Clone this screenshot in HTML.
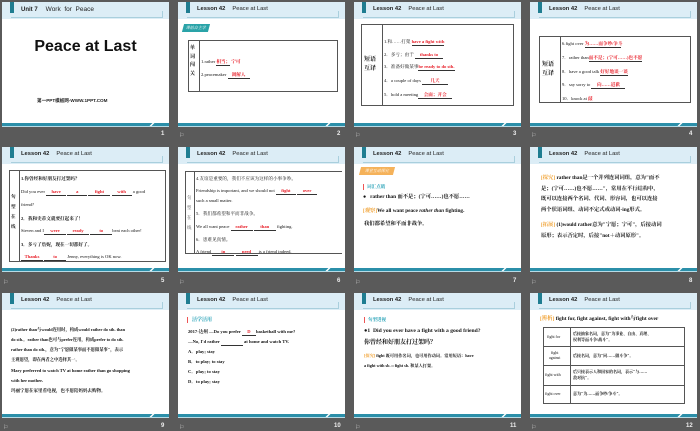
<!DOCTYPE html>
<html><head><meta charset="utf-8"><style>
*{margin:0;padding:0;box-sizing:border-box}
body{width:700px;height:431px;background:#5a5a5a;position:relative;overflow:hidden;font-family:"Liberation Serif","Noto Serif CJK SC",serif;}
.s{position:absolute;width:167px;height:125px;background:#fff;overflow:hidden}
.hd{position:absolute;left:0;top:0;width:167px;height:17px;background:#dcedf6}
.hl{position:absolute;left:9px;top:15px;width:152px;height:1px;background:#a9cfdd}
.hr{position:absolute;left:160px;top:9px;width:1px;height:7px;background:#a9cfdd}
.sq{position:absolute;left:8px;top:0;width:4px;height:11px;background:#1f7d91}
.ht{position:absolute;left:19px;top:4px;font:bold 5.8px "Liberation Sans",sans-serif;color:#222;white-space:nowrap}
.ht span{font-weight:normal;margin-left:7px}
.bt{position:absolute;left:0;top:121px;width:167px;height:3px;background:#2b8fa9}
.bt2{position:absolute;left:0;top:124px;width:167px;height:1px;background:#b7dbe6}
.sl{position:absolute;left:150px;top:119px;width:2px;height:5px;background:#fff;transform:skewX(-45deg)}
.n{position:absolute;font:bold 6px "Liberation Sans",sans-serif;color:#eee}
.ic{position:absolute;font:6px "Liberation Sans","Noto Sans CJK SC",sans-serif;color:#ccc}
.t{position:absolute;font-size:4.6px;color:#111;white-space:nowrap;line-height:1}
.r{color:#e8202a;font-weight:bold}
.b{font-weight:bold}
.box{position:absolute;border:1px solid #555}
.vl{position:absolute;width:1px;background:#555}
.u{display:inline-block;border-bottom:0.6px solid #333;text-align:center}
.tagg{position:absolute;background:#2aa3a8;color:#fff;font-size:4px;padding:1px 3px;transform:skewX(-15deg)}
.tago{position:absolute;background:#f5b25a;color:#fff;font-size:4px;padding:1px 5px;transform:skewX(-15deg)}
.cy{color:#2aa3b8;font-weight:bold}
.yl{color:#f0a030}
</style></head><body>

<div class="s" style="left:2px;top:2px">
<div class="hd"></div><div class="hl"></div><div class="hr"></div><div class="sq"></div>
<div class="ht" style="font-size:6px">Unit 7<span style="font-size:6.5px;margin-left:8px">Work&nbsp; for&nbsp; Peace</span></div>
<div style="position:absolute;left:0;top:36px;width:167px;text-align:center;font:bold 16px 'Liberation Sans',sans-serif;color:#111">Peace at Last</div>
<div style="position:absolute;left:35px;top:96px;font:bold 4.6px 'Liberation Sans','Noto Sans CJK SC',sans-serif;color:#222;white-space:nowrap">第一PPT模板网-WWW.1PPT.COM</div>
<div class="bt"></div><div class="bt2"></div><div class="sl"></div>
</div>
<div class="n" style="left:161px;top:131px">1</div>

<div class="s" style="left:178px;top:2px">
<div class="hd"></div><div class="hl"></div><div class="hr"></div><div class="sq"></div>
<div class="ht">Lesson 42<span>Peace at Last</span></div>
<div class="tagg" style="left:5px;top:22px">课前自主学</div>
<div class="box" style="left:10px;top:38px;width:150px;height:52px"></div>
<div class="vl" style="left:21px;top:38px;height:52px"></div>
<div class="t b" style="left:12px;top:43px;font-size:5px;line-height:8.5px;width:8px;white-space:normal">单词闯关</div>
<div class="t" style="left:23px;top:58px">1.rather <span class="r u">相当；</span> <span class="r">宁可</span></div>
<div class="t" style="left:23px;top:71px">2.peacemaker <span class="u r" style="width:22px">调解人</span></div>
<div class="bt"></div><div class="bt2"></div><div class="sl"></div>
</div>
<div class="ic" style="left:179px;top:132px">⚐</div>
<div class="n" style="left:337px;top:131px">2</div>

<div class="s" style="left:354px;top:2px">
<div class="hd"></div><div class="hl"></div><div class="hr"></div><div class="sq"></div>
<div class="ht">Lesson 42<span>Peace at Last</span></div>
<div class="box" style="left:7px;top:22px;width:153px;height:82px"></div>
<div class="vl" style="left:28px;top:22px;height:82px"></div>
<div class="t b" style="left:10px;top:54px;font-size:6px;line-height:9px">短语<br>互译</div>
<div class="t" style="left:30px;top:38px">1.和……打架 <span class="r u">have a fight with</span></div>
<div class="t" style="left:30px;top:51px">2．多亏；由于 <span class="r u" style="width:28px">thanks to</span></div>
<div class="t" style="left:30px;top:63px">3．准备好做某事<span class="r u">be ready to do sth.</span></div>
<div class="t" style="left:30px;top:77px">4．a couple of days <span class="r u" style="width:26px">几天</span></div>
<div class="t" style="left:30px;top:91px">5．hold a meeting<span class="r u" style="width:34px">会面；开会</span></div>
<div class="bt"></div><div class="bt2"></div><div class="sl"></div>
</div>
<div class="ic" style="left:355px;top:132px">⚐</div>
<div class="n" style="left:513px;top:131px">3</div>

<div class="s" style="left:530px;top:2px">
<div class="hd"></div><div class="hl"></div><div class="hr"></div><div class="sq"></div>
<div class="ht">Lesson 42<span>Peace at Last</span></div>
<div class="box" style="left:9px;top:34px;width:152px;height:67px"></div>
<div class="vl" style="left:30px;top:34px;height:67px"></div>
<div class="t b" style="left:12px;top:59px;font-size:6px;line-height:9px">短语<br>互译</div>
<div class="t" style="left:32px;top:40px">6.fight over <span class="r u" style="width:36px">为……而争吵/争斗</span></div>
<div class="t" style="left:32px;top:54px">7．rather than<span class="r u">而不是；(宁可……)也不愿</span></div>
<div class="t" style="left:32px;top:68px">8．have a good talk <span class="r u">好好地谈一谈</span></div>
<div class="t" style="left:32px;top:81px">9．say sorry to <span class="r u" style="width:34px">向……道歉</span></div>
<div class="t" style="left:32px;top:95px">10．knock at <span class="r">敲</span></div>
<div class="bt"></div><div class="bt2"></div><div class="sl"></div>
</div>
<div class="ic" style="left:531px;top:132px">⚐</div>
<div class="n" style="left:689px;top:131px">4</div>

<div class="s" style="left:2px;top:147px">
<div class="hd"></div><div class="hl"></div><div class="hr"></div><div class="sq"></div>
<div class="ht">Lesson 42<span>Peace at Last</span></div>
<div class="box" style="left:7px;top:23px;width:157px;height:92px"></div>
<div class="vl" style="left:17px;top:23px;height:92px"></div>
<div class="t b" style="left:9px;top:45px;font-size:4.6px;line-height:10px;width:6px;white-space:normal">句型在线</div>
<div class="t b" style="left:19px;top:30px">1.你曾经和好朋友打过架吗？</div>
<div class="t" style="left:19px;top:43px">Did you ever <span class="r u" style="width:20px">have</span> <span class="r u" style="width:20px">a</span> <span class="r u" style="width:22px">fight</span> <span class="r u" style="width:20px">with</span> a good</div>
<div class="t" style="left:19px;top:56px">friend?</div>
<div class="t b" style="left:19px;top:70px">2．我和史蒂文就要打起来了！</div>
<div class="t" style="left:19px;top:82px">Steven and I<span class="r u" style="width:22px">were</span> <span class="r u" style="width:22px">ready</span> <span class="r u" style="width:22px">to</span>beat each other!</div>
<div class="t b" style="left:19px;top:96px">3．多亏了詹妮，现在一切都好了。</div>
<div class="t" style="left:19px;top:108px"><span class="r u" style="width:22px">Thanks</span> <span class="r u" style="width:22px">to</span> Jenny, everything is OK now.</div>
<div class="bt"></div><div class="bt2"></div><div class="sl"></div>
</div>
<div class="ic" style="left:3px;top:279px">⚐</div>
<div class="n" style="left:161px;top:278px">5</div>

<div class="s" style="left:178px;top:147px">
<div class="hd"></div><div class="hl"></div><div class="hr"></div><div class="sq"></div>
<div class="ht">Lesson 42<span>Peace at Last</span></div>
<div class="box" style="left:7px;top:24px;width:157px;height:83px;border-right:none"></div>
<div class="vl" style="left:16px;top:24px;height:83px"></div>
<div class="t" style="left:9px;top:46px;font-size:4.4px;line-height:10px;width:6px;white-space:normal;color:#555">句型在线</div>
<div class="t" style="left:18px;top:30px">4.友谊是重要的，我们不应该为这样的小事争吵。</div>
<div class="t" style="left:18px;top:42px">Friendship is important, and we should not <span class="r u" style="width:20px">fight</span> <span class="r u" style="width:20px">over</span></div>
<div class="t" style="left:18px;top:52px">such a small matter.</div>
<div class="t" style="left:18px;top:65px">5．我们都希望和平而非战争。</div>
<div class="t" style="left:18px;top:78px">We all want peace <span class="r u" style="width:22px">rather</span> <span class="r u" style="width:22px">than</span> fighting.</div>
<div class="t" style="left:18px;top:91px">6．患难见真情。</div>
<div class="t" style="left:18px;top:103px">A friend <span class="r u" style="width:22px">in</span> <span class="r u" style="width:22px">need</span> is a friend indeed.</div>
<div class="bt"></div><div class="bt2"></div><div class="sl"></div>
</div>
<div class="ic" style="left:179px;top:279px">⚐</div>
<div class="n" style="left:337px;top:278px">6</div>

<div class="s" style="left:354px;top:147px">
<div class="hd"></div><div class="hl"></div><div class="hr"></div><div class="sq"></div>
<div class="ht">Lesson 42<span>Peace at Last</span></div>
<div class="tago" style="left:6px;top:20px">课堂互动探究</div>
<div style="position:absolute;left:9px;top:37px;width:1px;height:6px;background:#e55"></div>
<div class="t cy" style="left:13px;top:38px">词汇点睛</div>
<div class="t b" style="left:9px;top:48px;font-size:5.3px">●&nbsp;&nbsp; rather than 而不是；(宁可……)也不愿……</div>
<div class="t b" style="left:9px;top:62px;font-size:5.3px"><span class="yl">[观察]</span>We all want peace <i>rather than</i> fighting.</div>
<div class="t b" style="left:10px;top:75px;font-size:5.3px">我们都希望和平而非战争。</div>
<div class="bt"></div><div class="bt2"></div><div class="sl"></div>
</div>
<div class="ic" style="left:355px;top:279px">⚐</div>
<div class="n" style="left:513px;top:278px">7</div>

<div class="s" style="left:530px;top:147px">
<div class="hd"></div><div class="hl"></div><div class="hr"></div><div class="sq"></div>
<div class="ht">Lesson 42<span>Peace at Last</span></div>
<div class="t b" style="left:11px;top:26px;font-size:5.3px;line-height:10.5px">
<span class="yl">[探究]</span> rather than是一个并列连词词组，意为"而不<br>是；(宁可……)也不愿……"，常用在平行结构中，<br>既可以连接两个名词、代词、形容词，也可以连接<br>两个状语词组、动词不定式或动词-ing形式。</div>
<div class="t b" style="left:11px;top:73px;font-size:5.3px;line-height:10.5px">
<span class="yl">[拓展]</span> (1)would rather意为"宁愿；宁可"，后接动词<br>原形；表示否定时，后接"not＋动词原形"。</div>
<div class="bt"></div><div class="bt2"></div><div class="sl"></div>
</div>
<div class="ic" style="left:531px;top:279px">⚐</div>
<div class="n" style="left:689px;top:278px">8</div>

<div class="s" style="left:2px;top:293px">
<div class="hd"></div><div class="hl"></div><div class="hr"></div><div class="sq"></div>
<div class="ht">Lesson 42<span>Peace at Last</span></div>
<div class="t b" style="left:9px;top:32px;font-size:4.3px;line-height:10px">(2)rather than与would连用时，构成would rather do sth. than<br>do sth.。rather than也可与prefer连用，构成prefer to do sth.<br>rather than do sth.，意为"宁愿做某事而不愿做某事"，表示<br>主观愿望，即在两者之中选择其一。</div>
<div class="t b" style="left:9px;top:73px;font-size:4.5px;line-height:10px">Mary preferred to watch TV at home rather than go shopping<br>with her mother.<br>玛丽宁愿在家里看电视，也不愿陪妈妈去购物。</div>
<div class="bt"></div><div class="bt2"></div><div class="sl"></div>
</div>
<div class="ic" style="left:3px;top:424px">⚐</div>
<div class="n" style="left:161px;top:423px">9</div>

<div class="s" style="left:178px;top:293px">
<div class="hd"></div><div class="hl"></div><div class="hr"></div><div class="sq"></div>
<div class="ht">Lesson 42<span>Peace at Last</span></div>
<div style="position:absolute;left:9px;top:24px;width:1px;height:6px;background:#e55"></div>
<div class="t cy" style="left:14px;top:25px;font-size:5px">活学活用</div>
<div class="t b" style="left:10px;top:37px">2017·达州 —Do you prefer <span class="u r" style="width:14px">D</span>basketball with me?</div>
<div class="t b" style="left:10px;top:47px">—No, I'd rather <span class="u" style="width:22px">&nbsp;</span> at home and watch TV.</div>
<div class="t b" style="left:10px;top:57px">A．play; stay</div>
<div class="t b" style="left:10px;top:67px">B．to play; to stay</div>
<div class="t b" style="left:10px;top:77px">C．play; to stay</div>
<div class="t b" style="left:10px;top:87px">D．to play; stay</div>
<div class="bt"></div><div class="bt2"></div><div class="sl"></div>
</div>
<div class="ic" style="left:179px;top:424px">⚐</div>
<div class="n" style="left:334px;top:423px">10</div>

<div class="s" style="left:354px;top:293px">
<div class="hd"></div><div class="hl"></div><div class="hr"></div><div class="sq"></div>
<div class="ht">Lesson 42<span>Peace at Last</span></div>
<div style="position:absolute;left:10px;top:24px;width:1px;height:6px;background:#e55"></div>
<div class="t cy" style="left:14px;top:25px;font-size:4.5px">句型透视</div>
<div class="t b" style="left:10px;top:36px;font-size:5.6px">●1&nbsp; Did you ever have a fight with a good friend?</div>
<div class="t b" style="left:10px;top:47px;font-size:6px">你曾经和好朋友打过架吗？</div>
<div class="t b" style="left:10px;top:61px;font-size:4.2px"><span class="yl">[探究]</span> fight 既可用作名词，也可用作动词。常用短语：have</div>
<div class="t b" style="left:10px;top:71px;font-size:4.2px">a fight with sb.＝fight sb. 和某人打架。</div>
<div class="bt"></div><div class="bt2"></div><div class="sl"></div>
</div>
<div class="ic" style="left:355px;top:424px">⚐</div>
<div class="n" style="left:510px;top:423px">11</div>

<div class="s" style="left:530px;top:293px">
<div class="hd"></div><div class="hl"></div><div class="hr"></div><div class="sq"></div>
<div class="ht">Lesson 42<span>Peace at Last</span></div>
<div class="t b" style="left:10px;top:24px;font-size:5.4px"><span class="yl">[辨析]</span> fight for, fight against, fight with与fight over</div>
<div class="box" style="left:13px;top:34px;width:142px;height:77px"></div>
<div class="vl" style="left:40px;top:34px;height:77px"></div>
<div style="position:absolute;left:13px;top:53px;width:142px;height:1px;background:#555"></div>
<div style="position:absolute;left:13px;top:72px;width:142px;height:1px;background:#555"></div>
<div style="position:absolute;left:13px;top:92px;width:142px;height:1px;background:#555"></div>
<div class="t" style="left:17px;top:42px;font-size:4px">fight for</div>
<div class="t" style="left:19px;top:57px;font-size:4px;line-height:5px;text-align:center">fight<br>against</div>
<div class="t" style="left:15px;top:80px;font-size:4px">fight with</div>
<div class="t" style="left:15px;top:99px;font-size:4px">fight over</div>
<div class="t b" style="left:43px;top:38px;font-size:4px;line-height:6px">后接抽象名词，意为"为事业、自由、真理、<br>权利等而斗争/战斗"。</div>
<div class="t b" style="left:43px;top:61px;font-size:4px">后接名词，意为"同……做斗争"。</div>
<div class="t b" style="left:43px;top:76px;font-size:4px;line-height:6px">后只接表示人和国家的名词，表示"与……<br>敌对抗"。</div>
<div class="t b" style="left:43px;top:99px;font-size:4px">意为"为……而争吵/争斗"。</div>
<div class="bt"></div><div class="bt2"></div><div class="sl"></div>
</div>
<div class="ic" style="left:531px;top:424px">⚐</div>
<div class="n" style="left:686px;top:423px">12</div>

</body></html>
